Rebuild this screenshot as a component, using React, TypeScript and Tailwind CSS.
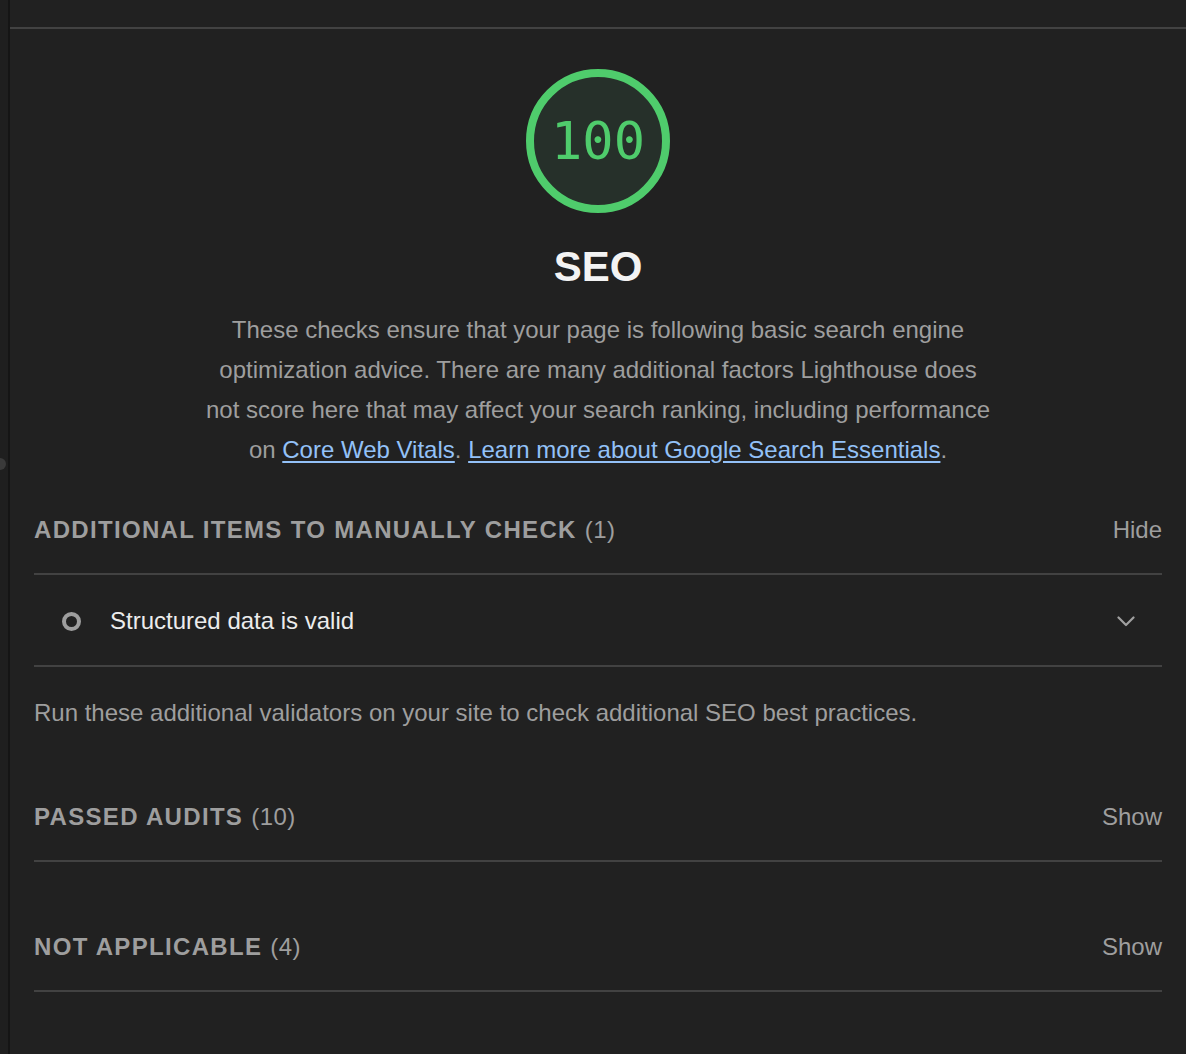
import React from "react";

function SectionHeader({ title, count, action, className }: { title: string; count: string; action: string; className?: string }) {
  return (
    <div className={"flex items-center justify-between border-b-2 border-[#424242] pb-[28px] " + (className ?? "")}>
      <div className="text-[24px] leading-[30px] text-[#9e9e9e] tracking-[0.055em]">
        <span className="font-bold">{title}</span> <span className="font-normal tracking-[0.02em]">{count}</span>
      </div>
      <div className="text-[24px] leading-[30px] text-[#9e9e9e]">{action}</div>
    </div>
  );
}

export default function App() {
  return (
    <div className="w-[1186px] h-[1054px] bg-[#212121] flex overflow-hidden relative" style={{ fontFamily: '"Liberation Sans", Arial, sans-serif' }}>
      <div className="w-[10px] bg-[#1f1f1f] h-full border-r-2 border-[#151515] shrink-0" />
      <div className="absolute left-0 top-[458px] w-[6px] h-[12px] rounded-r-full bg-[#3a3a3a]" />
      <div className="flex-1 flex flex-col">
        <div className="h-[29px] border-b-2 border-[#424242] shrink-0" />
        <div className="px-[24px] flex flex-col">
          <div className="flex justify-center mt-[40px]">
            <div className="w-[144px] h-[144px] rounded-full border-[8px] border-[#4fcc6c] bg-[#26302a] flex items-center justify-center">
              <span className="text-[52px] leading-none text-[#4fcc6c]" style={{ fontFamily: '"DejaVu Sans Mono", "Liberation Mono", monospace' }}>100</span>
            </div>
          </div>
          <div className="mt-[30px] text-center text-[42px] leading-[48px] font-bold text-[#f3f3f3]">SEO</div>
          <p className="mt-[19px] mx-auto w-[900px] text-center text-[24px] leading-[40px] text-[#9e9e9e] whitespace-nowrap">
            These checks ensure that your page is following basic search engine
            <br />
            optimization advice. There are many additional factors Lighthouse does
            <br />
            not score here that may affect your search ranking, including performance
            <br />
            on <a className="text-[#93c1f8] underline underline-offset-[3px]">Core Web Vitals</a>.{" "}
            <a className="text-[#93c1f8] underline underline-offset-[3px]">Learn more about Google Search Essentials</a>.
          </p>
          <SectionHeader className="mt-[45px]" title="ADDITIONAL ITEMS TO MANUALLY CHECK" count="(1)" action="Hide" />
          <div className="h-[92px] border-b-2 border-[#424242] flex items-center pt-[2px]">
            <div className="w-[19px] h-[19px] rounded-full border-[4px] border-[#9e9e9e] ml-[28px]" />
            <div className="ml-[29px] text-[24px] text-[#ececec] flex-1">Structured data is valid</div>
            <svg className="mr-[27px]" width="18" height="11" viewBox="0 0 18 11" fill="none" stroke="#a0a0a0" strokeWidth="2.2" strokeLinecap="round" strokeLinejoin="round">
              <path d="M1.5 1.5 L9 9 L16.5 1.5" />
            </svg>
          </div>
          <div className="mt-[31px] text-[24px] leading-[30px] text-[#9e9e9e]">Run these additional validators on your site to check additional SEO best practices.</div>
          <SectionHeader className="mt-[74px]" title="PASSED AUDITS" count="(10)" action="Show" />
          <SectionHeader className="mt-[70px]" title="NOT APPLICABLE" count="(4)" action="Show" />
        </div>
      </div>
    </div>
  );
}
